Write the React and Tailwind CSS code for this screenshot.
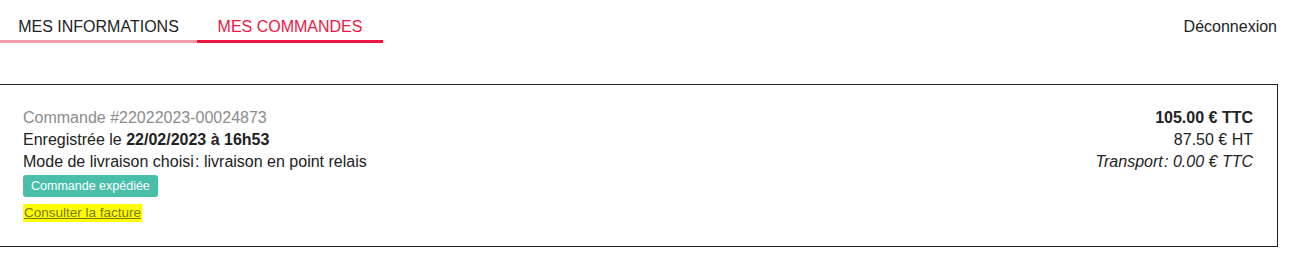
export default function App() {
  return (
    <div className="font-['Liberation_Sans',Arial,sans-serif] text-[#222] bg-white w-[1309px] h-[264px]">
      <div className="flex items-start justify-between pr-[32px]">
        <div className="flex">
          <div className="w-[197px] text-center pt-[17px] pb-[3px] leading-5 text-[16px] border-b-[3px] border-[#f49aab] text-[#222]">
            MES INFORMATIONS
          </div>
          <div className="w-[186px] text-center pt-[17px] pb-[3px] leading-5 text-[16px] border-b-[3px] border-[#ec1743] text-[#ec1743]">
            MES COMMANDES
          </div>
        </div>
        <div className="pt-[17px] leading-5 text-[16px] text-[#222]">Déconnexion</div>
      </div>
      <div className="mt-[41px] mr-[31px] border-t border-r border-b border-[#222] pl-[23px] pr-[24px] pt-[22px] pb-[24px] flex justify-between">
        <div className="flex flex-col items-start">
          <div className="text-[16px] leading-[22px] text-[#8c8c8c]">Commande #22022023-00024873</div>
          <div className="text-[16px] leading-[22px]">
            Enregistrée le <span className="font-bold">22/02/2023 à 16h53</span>
          </div>
          <div className="text-[16px] leading-[22px]">Mode de livraison choisi&#8202;: livraison en point relais</div>
          <div className="mt-[2px] h-[22px] px-[8px] flex items-center rounded-[3px] bg-[#49bfaa] text-white text-[12.5px]">
            Commande expédiée
          </div>
          <a className="mt-[7px] inline-block bg-[#ffff00] text-[#77771d] underline text-[13.5px] leading-[18px] px-[1px]">
            Consulter la facture
          </a>
        </div>
        <div className="flex flex-col items-end">
          <div className="text-[16px] leading-[22px] font-bold">105.00 € TTC</div>
          <div className="text-[16px] leading-[22px]">87.50 € HT</div>
          <div className="text-[16px] leading-[22px] italic">Transport&#8202;: 0.00 € TTC</div>
        </div>
      </div>
    </div>
  );
}
